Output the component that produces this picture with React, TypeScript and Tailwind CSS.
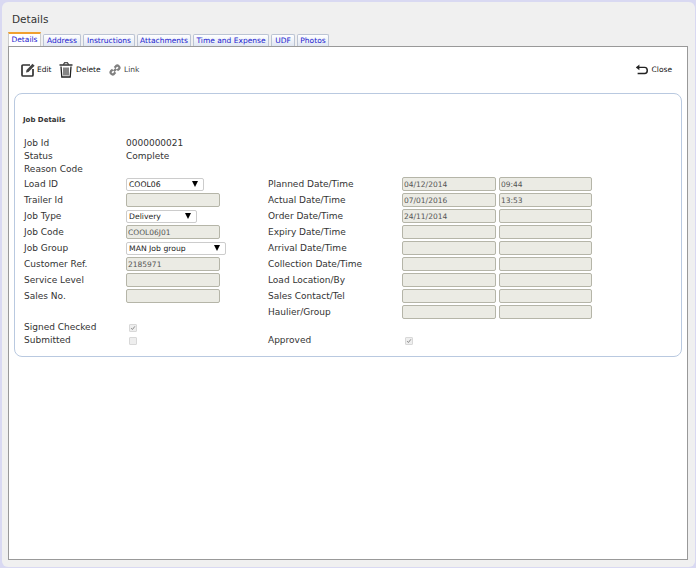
const F = "font-['DejaVu_Sans',sans-serif]";

function Input({ v, w = "w-[94px]" }: { v?: string; w?: string }) {
  return (
    <div className={`${w} h-[14px] shrink-0 rounded-[2px] border border-[#b5b5a8] bg-[#ebebe4] pl-[1px] text-[7.5px] leading-[13px] text-[#555]`}>
      {v}
    </div>
  );
}

function Select({ v, w }: { v: string; w: string }) {
  return (
    <div className={`${w} h-[13px] flex items-center justify-between rounded-[2px] border border-[#ccc] bg-white pl-[2px] pr-[5px] text-[7.7px] leading-[11px] text-[#222]`}>
      <span>{v}</span>
      <span className="h-0 w-0 border-x-[3px] border-t-[6px] border-x-transparent border-t-black" />
    </div>
  );
}

function Label({ t, w = "w-[102px]" }: { t: string; w?: string }) {
  return <div className={`${w} shrink-0 text-[9px] leading-[13px] text-[#333]`}>{t}</div>;
}

function Check({ on }: { on?: boolean }) {
  return (
    <div className="flex h-[8px] w-[8px] items-center justify-center rounded-[1px] border border-[#d8d8d8] bg-[#eee]">
      {on && (
        <svg viewBox="0 0 8 8" className="h-[8px] w-[8px]">
          <path d="M1.5 4.2 L3.2 6 L6.5 1.8" fill="none" stroke="#888" strokeWidth="1.3" />
        </svg>
      )}
    </div>
  );
}

const tabs: [string, string][] = [
  ["Address", "w-[38px]"],
  ["Instructions", "w-[52px]"],
  ["Attachments", "w-[54px]"],
  ["Time and Expense", "w-[76px]"],
  ["UDF", "w-[24px]"],
  ["Photos", "w-[32px]"],
];

const leftRows: [string, React.ReactNode][] = [
  ["Load ID", <Select v="COOL06" w="w-[78px]" />],
  ["Trailer Id", <Input />],
  ["Job Type", <Select v="Delivery" w="w-[71px]" />],
  ["Job Code", <Input v="COOL06J01" />],
  ["Job Group", <Select v="MAN Job group" w="w-[100px]" />],
  ["Customer Ref.", <Input v="2185971" />],
  ["Service Level", <Input />],
  ["Sales No.", <Input />],
  ["", null],
];

const rightRows: [string, string?, string?][] = [
  ["Planned Date/Time", "04/12/2014", "09:44"],
  ["Actual Date/Time", "07/01/2016", "13:53"],
  ["Order Date/Time", "24/11/2014"],
  ["Expiry Date/Time"],
  ["Arrival Date/Time"],
  ["Collection Date/Time"],
  ["Load Location/By"],
  ["Sales Contact/Tel"],
  ["Haulier/Group"],
];

export default function App() {
  return (
    <div className={`${F} h-[568px] w-[696px] overflow-hidden bg-[#d9d9f2] pl-[2px] pt-[2px]`}>
      <div className="flex h-[565px] w-[693px] flex-col rounded-[6px] bg-[#f0f0f0] pl-[6px] pr-[7px] pb-[7px]">
        <div className="h-[31px] pl-[4px] pt-[10px] text-[10.5px] leading-[14px] text-[#333]">Details</div>
        <div className="flex h-[13px] items-end gap-[2px]">
          <div className="flex h-[14px] w-[33px] items-center justify-center border-t-2 border-x border-t-[#f0a030] border-x-[#ccc] bg-white text-[7.5px] text-[#1a1ad0]">
            Details
          </div>
          {tabs.map(([t, w]) => (
            <div
              key={t}
              className={`${w} flex h-[12px] items-center justify-center rounded-t-[2px] border border-b-0 border-[#bcc4d4] bg-gradient-to-b from-white to-[#dfe6f2] text-[7.5px] whitespace-nowrap text-[#1a1ad0]`}
            >
              {t}
            </div>
          ))}
        </div>
        <div className="flex flex-1 flex-col border border-[#999] bg-white px-[5px]">
          <div className="flex h-[46px] items-center justify-between pl-[7px] pr-[10px]">
            <div className="flex items-center text-[7.5px] text-[#111]">
              <svg viewBox="0 0 14 14" className="mr-[2px] h-[14px] w-[14px]">
                <path d="M9 2 H2 Q1 2 1 3 V12 Q1 13 2 13 H11 Q12 13 12 12 V6" fill="none" stroke="#333" strokeWidth="1.7" />
                <path d="M5 9.5 L5.5 7 L11.5 0.8 L13.6 2.8 L7.5 9 Z" fill="#444" />
              </svg>
              <span className="mr-[6px] w-[16px]">Edit</span>
              <svg viewBox="0 0 14 16" className="mr-[3px] h-[16px] w-[14px]">
                <path d="M0.5 3 H13.5" fill="none" stroke="#222" strokeWidth="1.4" />
                <path d="M4.5 2.5 L5.5 0.8 H8.5 L9.5 2.5" fill="none" stroke="#222" strokeWidth="1.1" />
                <path d="M2 4.5 L2.8 15 H11.2 L12 4.5" fill="none" stroke="#222" strokeWidth="1.3" />
                <path d="M5 5.5 V13.5 M7 5.5 V13.5 M9 5.5 V13.5" fill="none" stroke="#222" strokeWidth="1.1" />
              </svg>
              <span className="mr-[8px] w-[25px]">Delete</span>
              <svg viewBox="0 0 16 16" className="mr-[3px] h-[12px] w-[12px]">
                <path d="M6.5 9.5 L9.5 6.5 M7.5 5 L9.5 2.6 Q11.2 1.2 13 3 Q14.8 4.8 13.4 6.5 L11 8.5 M8.5 11 L6.5 13.4 Q4.8 14.8 3 13 Q1.2 11.2 2.6 9.5 L5 7.5" fill="none" stroke="#808080" strokeWidth="3" />
              </svg>
              <span className="text-[#444]">Link</span>
            </div>
            <div className="flex items-center text-[7.5px] text-[#111]">
              <svg viewBox="0 0 16 16" className="mr-[3px] h-[14px] w-[14px]">
                <path d="M2 5 H11 Q14 5 14 8.5 Q14 12 11 12 H3" fill="none" stroke="#222" strokeWidth="1.7" />
                <path d="M1 5 L5 1.8 V8.2 Z" fill="#222" />
              </svg>
              <span>Close</span>
            </div>
          </div>
          <div className="flex h-[264px] flex-col rounded-[8px] border border-[#b9c9e0] pl-[8px] pt-[21px]">
            <div className="h-[22px] text-[7px] font-bold leading-[10px] text-[#333]">Job Details</div>
            {[
              ["Job Id", "0000000021"],
              ["Status", "Complete"],
              ["Reason Code", ""],
            ].map(([a, b]) => (
              <div key={a} className="flex h-[13px] items-center pl-[1px]">
                <Label t={a} />
                <span className="text-[9px] leading-[13px] text-[#333]">{b}</span>
              </div>
            ))}
            <div className="flex">
              <div className="flex w-[245px] shrink-0 flex-col pl-[1px]">
                {leftRows.map(([l, c], i) => (
                  <div key={i} className="flex h-[16px] items-center">
                    <Label t={l} />
                    {c}
                  </div>
                ))}
              </div>
              <div className="flex flex-col">
                {rightRows.map(([l, a, b]) => (
                  <div key={l} className="flex h-[16px] items-center">
                    <Label t={l} w="w-[134px]" />
                    <Input v={a} />
                    <div className="w-[3px]" />
                    <Input v={b} w="w-[93px]" />
                  </div>
                ))}
              </div>
            </div>
            <div className="flex pt-[1px]">
              <div className="flex w-[245px] shrink-0 flex-col pl-[1px]">
                <div className="flex h-[13px] items-center">
                  <Label t="Signed Checked" />
                  <div className="pl-[3px]"><Check on /></div>
                </div>
                <div className="flex h-[13px] items-center">
                  <Label t="Submitted" />
                  <div className="pl-[3px]"><Check /></div>
                </div>
              </div>
              <div className="flex flex-col pt-[13px]">
                <div className="flex h-[13px] items-center">
                  <Label t="Approved" w="w-[137px]" />
                  <Check on />
                </div>
              </div>
            </div>
          </div>
        </div>
      </div>
    </div>
  );
}
